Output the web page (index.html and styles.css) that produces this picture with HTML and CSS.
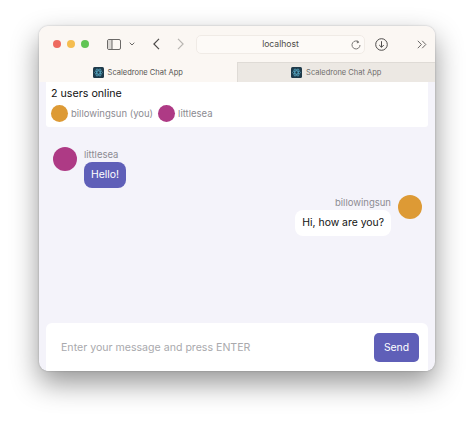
FILE: index.html
```html
<!DOCTYPE html>
<html lang="en">
<head>
    <meta charset="UTF-8">
    <meta name="viewport" content="width=device-width, initial-scale=1.0">
    <title>Scaledrone Chat App</title>
    <link rel="stylesheet" href="styles.css">
</head>
<body>
    <div class="window">
        <div class="toolbar">
            <div class="lights">
                <span class="light red"></span>
                <span class="light yellow"></span>
                <span class="light green"></span>
            </div>
            <svg class="icon sidebar-icon" width="14" height="11" viewBox="0 0 14 11"><rect x="0.5" y="0.5" width="13" height="10" rx="1.5" fill="none" stroke="#6b6967"/><rect x="1" y="1" width="4" height="9" fill="#dbd8d4"/><path d="M5 .5v10" stroke="#6b6967"/></svg>
            <svg class="icon small-chevron" width="6" height="4" viewBox="0 0 6 4"><path d="M.7.7 3 3l2.3-2.3" fill="none" stroke="#6a6866"/></svg>
            <svg class="icon back" width="7" height="12" viewBox="0 0 7 12"><path d="M6 .8.9 6 6 11.2" fill="none" stroke="#4e4c4a" stroke-width="1.2"/></svg>
            <svg class="icon forward" width="7" height="12" viewBox="0 0 7 12"><path d="M1 .8 6.100 6 1 11.2" fill="none" stroke="#b9b6b2" stroke-width="1.2"/></svg>
            <div class="address">
                <span class="address-text">localhost</span>
                <svg class="reload" width="10" height="10" viewBox="0 0 10 10"><path d="M7.900 2.200A4 4 0 1 0 9 5" fill="none" stroke="#7a7876"/><path d="M5.800.3 8.300 2.300 5.900 3.600z" fill="#7a7876"/></svg>
            </div>
            <svg class="icon download" width="13" height="13" viewBox="0 0 13 13"><circle cx="6.500" cy="6.500" r="5.800" fill="none" stroke="#4e4c4a"/><path d="M6.500 3.200v6M4.200 7l2.300 2.300L8.800 7" fill="none" stroke="#4e4c4a"/></svg>
            <svg class="icon more" width="10" height="9" viewBox="0 0 10 9"><path d="M.8.8 4.400 4.500.8 8.200M5.200.8 8.800 4.500 5.200 8.200" fill="none" stroke="#6a6866"/></svg>
        </div>
        <div class="tabs">
            <div class="tab active">
                <svg class="favicon" width="11" height="11" viewBox="0 0 11 11"><rect width="11" height="11" rx="1.500" fill="#1f3a4a"/><g fill="none" stroke="#5fb6d2" stroke-width=".6"><ellipse cx="5.500" cy="5.500" rx="4" ry="1.600"/><ellipse cx="5.500" cy="5.500" rx="4" ry="1.600" transform="rotate(60 5.500 5.500)"/><ellipse cx="5.500" cy="5.500" rx="4" ry="1.600" transform="rotate(120 5.500 5.500)"/></g></svg>
                <span>Scaledrone Chat App</span>
            </div>
            <div class="tab">
                <svg class="favicon" width="11" height="11" viewBox="0 0 11 11"><rect width="11" height="11" rx="1.500" fill="#1f3a4a"/><g fill="none" stroke="#5fb6d2" stroke-width=".6"><ellipse cx="5.500" cy="5.500" rx="4" ry="1.600"/><ellipse cx="5.500" cy="5.500" rx="4" ry="1.600" transform="rotate(60 5.500 5.500)"/><ellipse cx="5.500" cy="5.500" rx="4" ry="1.600" transform="rotate(120 5.500 5.500)"/></g></svg>
                <span>Scaledrone Chat App</span>
            </div>
        </div>
        <div class="app">
            <div class="members">
                <div class="members-count">2 users online</div>
                <div class="members-list">
                    <span class="avatar avatar-small orange"></span>
                    <span class="member-name">billowingsun (you)</span>
                    <span class="avatar avatar-small purple"></span>
                    <span class="member-name">littlesea</span>
                </div>
            </div>
            <div class="messages">
                <div class="message">
                    <span class="avatar purple"></span>
                    <div class="message-body">
                        <div class="username">littlesea</div>
                        <div class="bubble bubble-purple">Hello!</div>
                    </div>
                </div>
                <div class="message message-me">
                    <span class="avatar orange"></span>
                    <div class="message-body">
                        <div class="username">billowingsun</div>
                        <div class="bubble">Hi, how are you?</div>
                    </div>
                </div>
            </div>
            <div class="composer">
                <input class="composer-input" type="text" placeholder="Enter your message and press ENTER">
                <button class="send">Send</button>
            </div>
        </div>
    </div>
</body>
</html>
```

FILE: styles.css
```css
body {
    margin: 0;
    padding: 26px 39px 0;
    box-sizing: border-box;
    height: 422px;
    overflow: hidden;
    background: #fff;
    font-family: Inter, "Liberation Sans", sans-serif;
}
.window {
    width: 396px;
    height: 345px;
    display: flex;
    flex-direction: column;
    border-radius: 9px;
    overflow: hidden;
    background: #f4f3fa;
    box-shadow: 0 12px 28px rgba(0, 0, 0, 0.42), 0 0 2px rgba(0, 0, 0, 0.25);
}
.toolbar {
    height: 36px;
    flex: none;
    display: flex;
    align-items: center;
    background: #fbf7f3;
    padding-left: 14px;
}
.lights {
    display: flex;
    gap: 6px;
}
.light {
    width: 8px;
    height: 8px;
    border-radius: 50%;
}
.red { background: #ee6a5f; }
.yellow { background: #f5bd4f; }
.green { background: #61c454; }
.icon {
    flex: none;
}
.sidebar-icon { margin-left: 18px; }
.small-chevron { margin-left: 8px; }
.back { margin-left: 18px; }
.forward { margin-left: 17px; }
.address {
    width: 169px;
    height: 19px;
    margin-left: 12px;
    display: flex;
    align-items: center;
    justify-content: center;
    position: relative;
    border: 1px solid #f0ebe6;
    box-sizing: border-box;
    border-radius: 5px;
    background: #fdfaf7;
    color: #4e4c4a;
    font-size: 8.6px;
    font-weight: 400;
}
.reload {
    position: absolute;
    right: 3px;
    top: 4px;
}
.download { margin-left: 10px; }
.more { margin-left: 29px; }
.tabs {
    height: 20px;
    flex: none;
    display: flex;
}
.tab {
    flex: 1;
    display: flex;
    align-items: center;
    justify-content: center;
    gap: 4px;
    background: #ece8e3;
    color: #6f6d6b;
    font-size: 7.5px;
    border-top: 1px solid #dfdbd6;
    box-sizing: border-box;
    border-left: 1px solid #dfdbd6;
}
.tab.active {
    background: #fbf7f3;
    color: #555351;
    border: none;
}
.app {
    flex: 1;
    min-height: 0;
    display: flex;
    flex-direction: column;
    padding: 0 7px;
}
.members {
    height: 45px;
    flex: none;
    box-sizing: border-box;
    background: #fff;
    padding: 4px 5px 0;
    border-radius: 0 0 3px 3px;
}
.members-count {
    font-size: 10.7px;
    line-height: 15px;
    color: #111;
}
.members-list {
    display: flex;
    align-items: center;
    margin-top: 4px;
    font-size: 9.5px;
    color: #8c8b92;
}
.avatar {
    width: 24px;
    height: 24px;
    flex: none;
    border-radius: 50%;
}
.avatar-small {
    width: 17px;
    height: 17px;
    margin-right: 3px;
}
.member-name {
    margin-right: 5px;
}
.orange { background: #dd9a35; }
.purple { background: #ae3a85; }
.messages {
    flex: 1;
    min-height: 0;
    padding: 20px 6px 0 7px;
    display: flex;
    flex-direction: column;
    gap: 7px;
}
.message {
    display: flex;
    gap: 7px;
}
.message-me {
    flex-direction: row-reverse;
}
.message-me .message-body {
    align-items: flex-end;
}
.message-body {
    display: flex;
    flex-direction: column;
}
.username {
    font-size: 9.5px;
    line-height: 13px;
    color: #8c8b92;
    margin-top: 1px;
    margin-bottom: 1px;
}
.bubble {
    background: #fff;
    color: #111;
    font-size: 10.4px;
    line-height: 26px;
    padding: 0 7px;
    border-radius: 8px;
}
.bubble-purple {
    background: #5f5fb8;
    color: #fff;
}
.composer {
    height: 48px;
    flex: none;
    box-sizing: border-box;
    display: flex;
    align-items: center;
    padding: 0 9px 0 15px;
    background: #fff;
    border-radius: 6px 6px 0 0;
}
.composer-input {
    flex: 1;
    min-width: 0;
    border: none;
    outline: none;
    padding: 0;
    font-family: inherit;
    font-size: 10.6px;
    background: transparent;
}
.composer-input::placeholder {
    color: #a9a9ad;
}
.send {
    width: 45px;
    height: 29px;
    border: none;
    border-radius: 5px;
    background: #5f5fb8;
    color: #fff;
    font-family: inherit;
    font-size: 10.4px;
    padding: 0;
}
```
